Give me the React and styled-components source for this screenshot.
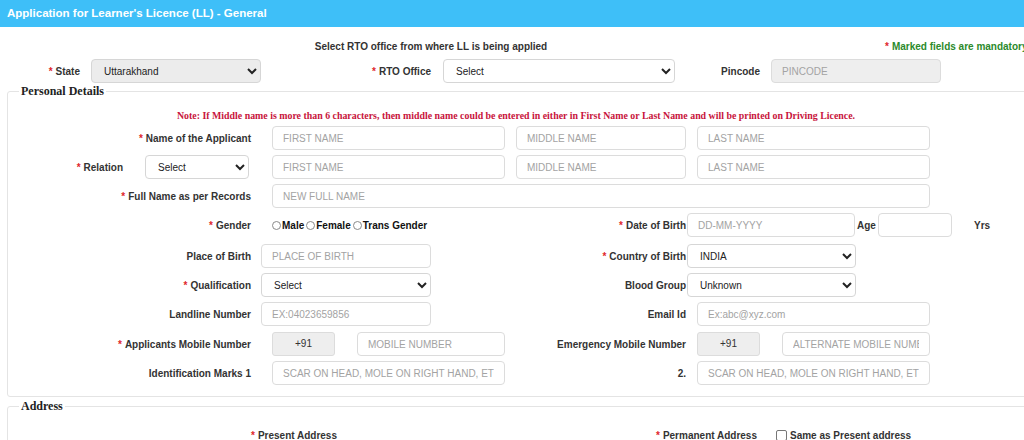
import React from "react";
import styled, { createGlobalStyle } from "styled-components";

const GlobalStyle = createGlobalStyle`
  html, body {
    margin: 0;
    overflow: hidden;
    background: #fff;
    font-family: "Liberation Sans", Arial, sans-serif;
    color: #333;
  }
  * { box-sizing: border-box; }
`;

const Page = styled.div`
  width: 1060px;
`;

const TitleBar = styled.div`
  height: 27px;
  line-height: 27px;
  padding-left: 7px;
  background: #3ebff8;
  color: #fff;
  font-size: 11.5px;
  font-weight: bold;
`;

const Intro = styled.div`
  display: grid;
  grid-template-columns: 862px 1fr;
  margin-top: 14px;
  line-height: 12px;
  font-size: 10px;
  font-weight: bold;
  white-space: nowrap;
`;

const Subtitle = styled.div`
  text-align: center;
  color: #333;
`;

const Mandatory = styled.div`
  padding-left: 23px;
  color: #2b8a2b;
`;

const Req = styled.span`
  color: #e0262b;
  margin-right: 3px;
`;

const Row = styled.div`
  display: flex;
  align-items: center;
  height: 24px;
  margin-top: ${(p) => p.$mt || 0}px;
  margin-bottom: ${(p) => (p.$mb === undefined ? 5 : p.$mb)}px;
`;

const Label = styled.label`
  flex: none;
  width: ${(p) => p.$w}px;
  text-align: right;
  font-size: 10px;
  font-weight: bold;
  color: #333;
  white-space: nowrap;
`;

const Input = styled.input`
  flex: none;
  width: ${(p) => p.$w}px;
  margin-left: ${(p) => p.$ml || 0}px;
  height: 24px;
  padding: 0 10px;
  border: 1px solid #dcdcdc;
  border-radius: 4px;
  background: ${(p) => (p.$muted ? "#eee" : "#fff")};
  font-family: "Liberation Sans", Arial, sans-serif;
  font-size: 10px;
  color: #333;
  outline: none;

  &::placeholder {
    color: #a3a3a3;
  }
`;

const Select = styled.select`
  flex: none;
  width: ${(p) => p.$w}px;
  margin-left: ${(p) => p.$ml || 0}px;
  height: 24px;
  padding: 0 4px 0 8px;
  border: 1px solid #d6d6d6;
  border-radius: 4px;
  background: ${(p) => (p.$muted ? "#ececec" : "#fff")};
  font-family: "Liberation Sans", Arial, sans-serif;
  font-size: 10px;
  color: #222;
  outline: none;
`;

const Prefix = styled.div`
  flex: none;
  width: 63px;
  margin-left: ${(p) => p.$ml || 0}px;
  height: 24px;
  line-height: 22px;
  text-align: center;
  border: 1px solid #dcdcdc;
  border-radius: 3px;
  background: #eee;
  font-size: 10px;
  color: #333;
`;

const Fieldset = styled.fieldset`
  margin: ${(p) => p.$mt || 0}px 0 0 7px;
  padding: 0 0 ${(p) => p.$pb || 0}px 0;
  border: 1px solid #e4e4e4;
  border-radius: 3px;
  min-width: 0;
`;

const Legend = styled.legend`
  margin-left: 11px;
  padding: 0 2px;
  line-height: 14px;
  font-family: "Liberation Serif", "Times New Roman", serif;
  font-size: 12px;
  font-weight: bold;
  color: #222;
`;

const Note = styled.div`
  width: 1016px;
  margin: 12px 0 4px;
  text-align: center;
  line-height: 12px;
  font-family: "Liberation Serif", "Times New Roman", serif;
  font-size: 9.9px;
  font-weight: bold;
  color: #c8143c;
  white-space: nowrap;
`;

const RadioGroup = styled.div`
  flex: none;
  display: flex;
  align-items: center;
  width: 200px;
  margin-left: 21px;
`;

const RadioOption = styled.label`
  display: flex;
  align-items: center;
  margin-right: 2px;
  font-size: 10px;
  font-weight: bold;
  color: #111;
`;

const RadioDot = styled.span`
  width: 9px;
  height: 9px;
  margin-right: 1px;
  border: 1px solid #8a8a8a;
  border-radius: 50%;
  background: #fff;
`;

const Unit = styled.span`
  flex: none;
  width: ${(p) => p.$w}px;
  margin-left: ${(p) => p.$ml || 0}px;
  font-size: 10px;
  font-weight: bold;
  color: #333;
`;

const Check = styled.span`
  flex: none;
  width: 11px;
  height: 11px;
  margin: 0 3px 0 19px;
  border: 1px solid #777;
  border-radius: 2px;
`;

const Text = styled.span`
  font-size: 10px;
  font-weight: bold;
  color: #333;
  white-space: nowrap;
`;

const Star = ({ children }) => (
  <>
    <Req>*</Req>
    {children}
  </>
);

export default function App() {
  return (
    <Page>
      <GlobalStyle />
      <TitleBar>Application for Learner's Licence (LL) - General</TitleBar>

      <Intro>
        <Subtitle>Select RTO office from where LL is being applied</Subtitle>
        <Mandatory>
          <Req>*</Req>Marked fields are mandatory
        </Mandatory>
      </Intro>

      <Row $mt={6} $mb={1}>
        <Label $w={80}>
          <Star>State</Star>
        </Label>
        <Select $w={170} $ml={11} $muted defaultValue="uk">
          <option value="uk">Uttarakhand</option>
        </Select>
        <Label $w={170}>
          <Star>RTO Office</Star>
        </Label>
        <Select $w={232} $ml={12}>
          <option>Select</option>
        </Select>
        <Label $w={85}>Pincode</Label>
        <Input $w={170} $ml={11} $muted placeholder="PINCODE" />
      </Row>

      <Fieldset $pb={6}>
        <Legend>Personal Details</Legend>
        <Note>
          Note: If Middle name is more than 6 characters, then middle name could be entered in either in First Name or Last
          Name and will be printed on Driving Licence.
        </Note>

        <Row>
          <Label $w={243}>
            <Star>Name of the Applicant</Star>
          </Label>
          <Input $w={233} $ml={21} placeholder="FIRST NAME" />
          <Input $w={170} $ml={11} placeholder="MIDDLE NAME" />
          <Input $w={233} $ml={11} placeholder="LAST NAME" />
        </Row>

        <Row>
          <Label $w={115}>
            <Star>Relation</Star>
          </Label>
          <Select $w={104} $ml={22}>
            <option>Select</option>
          </Select>
          <Input $w={233} $ml={23} placeholder="FIRST NAME" />
          <Input $w={170} $ml={11} placeholder="MIDDLE NAME" />
          <Input $w={233} $ml={11} placeholder="LAST NAME" />
        </Row>

        <Row>
          <Label $w={243}>
            <Star>Full Name as per Records</Star>
          </Label>
          <Input $w={658} $ml={21} placeholder="NEW FULL NAME" />
        </Row>

        <Row $mb={7}>
          <Label $w={243}>
            <Star>Gender</Star>
          </Label>
          <RadioGroup>
            <RadioOption>
              <RadioDot />
              Male
            </RadioOption>
            <RadioOption>
              <RadioDot />
              Female
            </RadioOption>
            <RadioOption>
              <RadioDot />
              Trans Gender
            </RadioOption>
          </RadioGroup>
          <Label $w={214}>
            <Star>Date of Birth</Star>
          </Label>
          <Input $w={168} $ml={1} placeholder="DD-MM-YYYY" />
          <Unit $w={21} $ml={2}>Age</Unit>
          <Input $w={74} />
          <Unit $w={20} $ml={22}>Yrs</Unit>
        </Row>

        <Row>
          <Label $w={243}>Place of Birth</Label>
          <Input $w={170} $ml={10} placeholder="PLACE OF BIRTH" />
          <Label $w={255}>
            <Star>Country of Birth</Star>
          </Label>
          <Select $w={169} $ml={1}>
            <option>INDIA</option>
          </Select>
        </Row>

        <Row>
          <Label $w={243}>
            <Star>Qualification</Star>
          </Label>
          <Select $w={170} $ml={10}>
            <option>Select</option>
          </Select>
          <Label $w={255}>Blood Group</Label>
          <Select $w={169} $ml={1}>
            <option>Unknown</option>
          </Select>
        </Row>

        <Row $mb={6}>
          <Label $w={243}>Landline Number</Label>
          <Input $w={170} $ml={10} placeholder="EX:04023659856" />
          <Label $w={255}>Email Id</Label>
          <Input $w={233} $ml={11} placeholder="Ex:abc@xyz.com" />
        </Row>

        <Row>
          <Label $w={243}>
            <Star>Applicants Mobile Number</Star>
          </Label>
          <Prefix $ml={21}>+91</Prefix>
          <Input $w={148} $ml={22} placeholder="MOBILE NUMBER" />
          <Label $w={181}>Emergency Mobile Number</Label>
          <Prefix $ml={11}>+91</Prefix>
          <Input $w={148} $ml={22} placeholder="ALTERNATE MOBILE NUMBER" />
        </Row>

        <Row>
          <Label $w={243}>Identification Marks 1</Label>
          <Input $w={233} $ml={21} placeholder="SCAR ON HEAD, MOLE ON RIGHT HAND, ETC" />
          <Label $w={181}>2.</Label>
          <Input $w={233} $ml={11} placeholder="SCAR ON HEAD, MOLE ON RIGHT HAND, ETC" />
        </Row>
      </Fieldset>

      <Fieldset $mt={2}>
        <Legend>Address</Legend>
        <Row $mt={10}>
          <Label $w={329}>
            <Star>Present Address</Star>
          </Label>
          <Label $w={420}>
            <Star>Permanent Address</Star>
          </Label>
          <Check />
          <Text>Same as Present address</Text>
        </Row>
      </Fieldset>
    </Page>
  );
}
